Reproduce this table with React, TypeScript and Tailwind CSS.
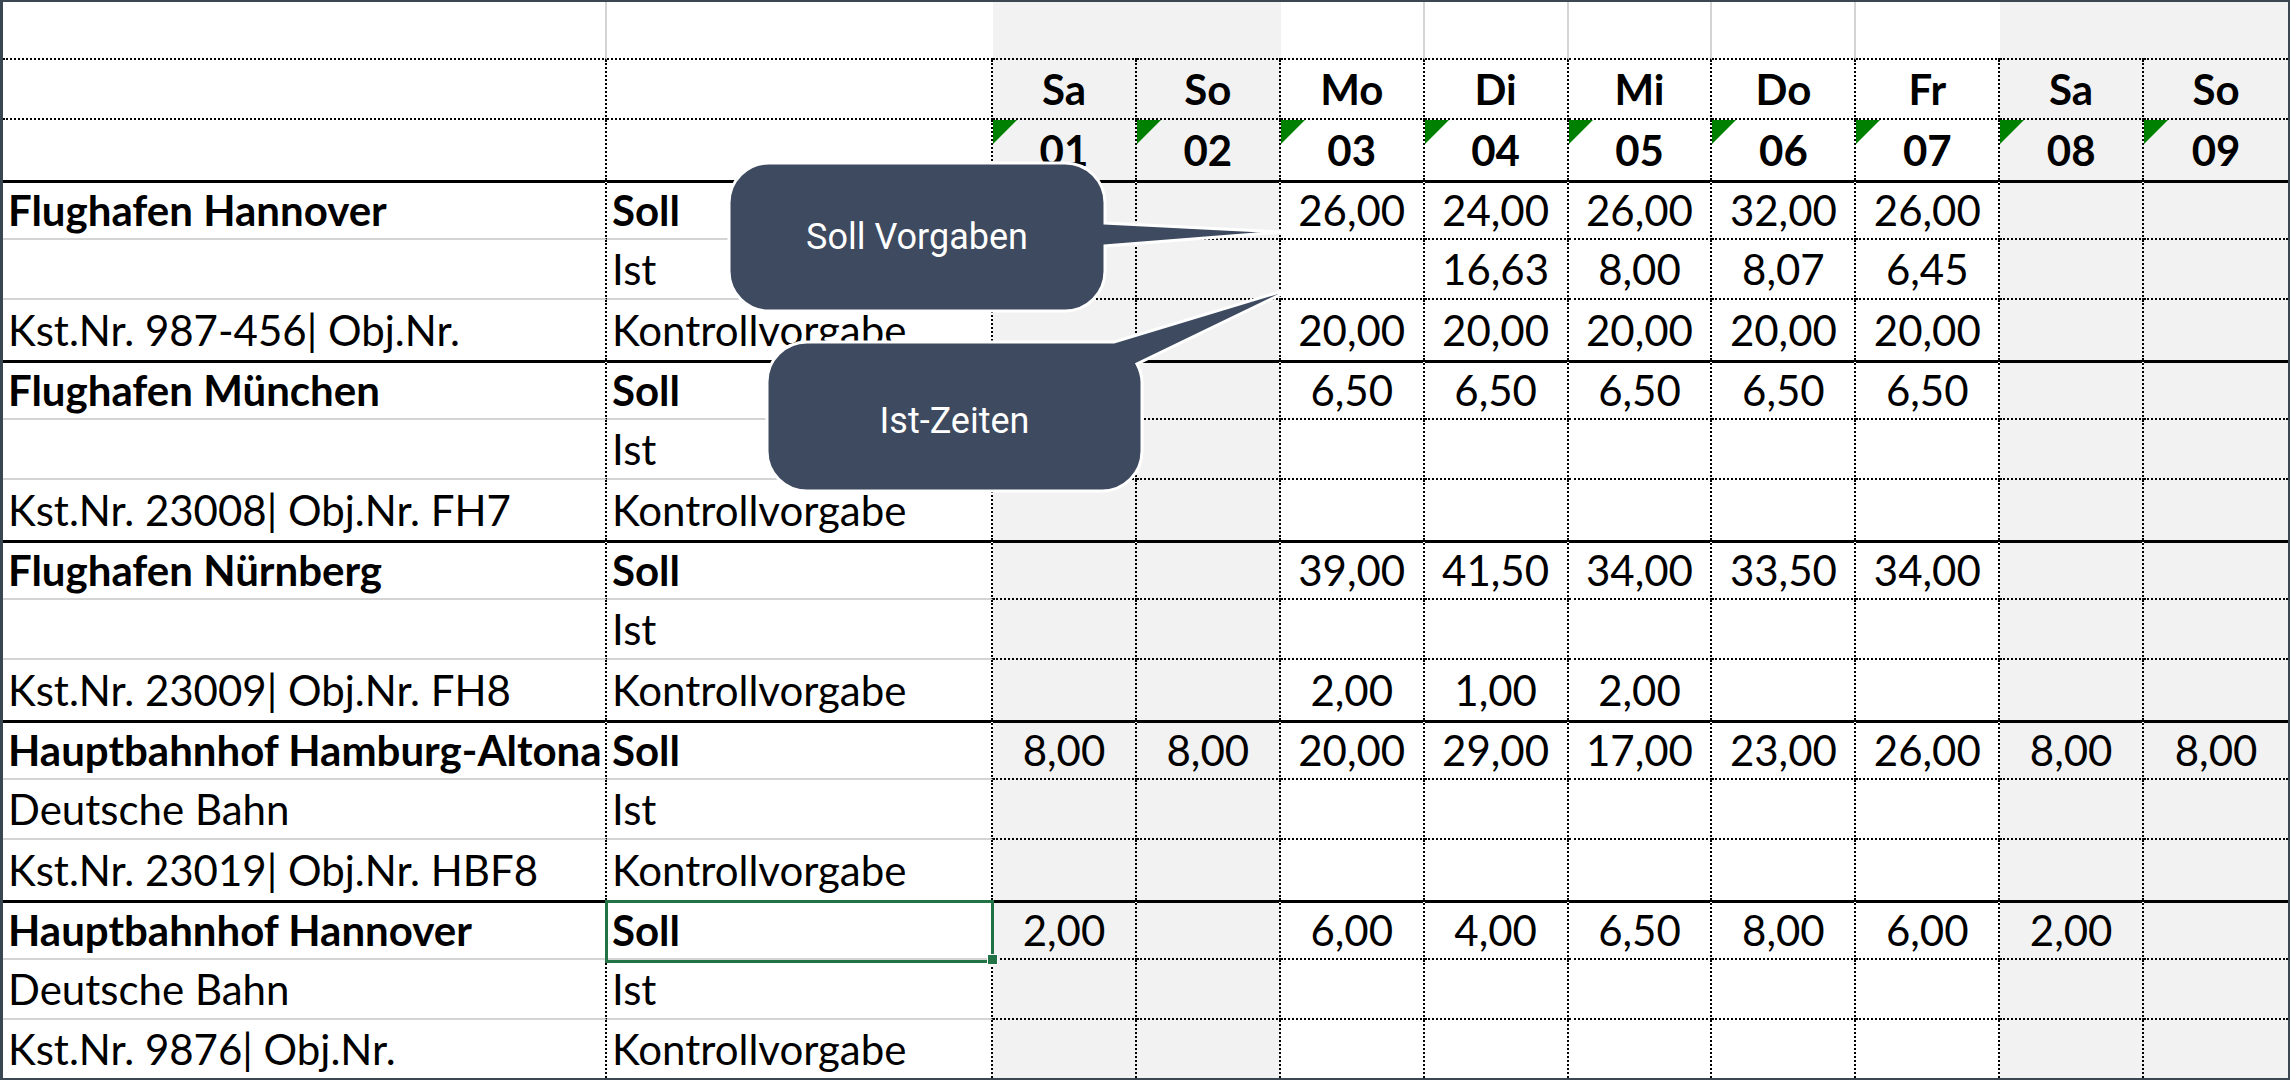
import React from 'react';

const days = ['Sa', 'So', 'Mo', 'Di', 'Mi', 'Do', 'Fr', 'Sa', 'So'];
const dates = ['01', '02', '03', '04', '05', '06', '07', '08', '09'];
const weekend = [0, 1, 7, 8];

type Group = {
  name: string;
  sub: string;
  kst: string;
  soll: string[];
  ist: string[];
  kontroll: string[];
};

const empty = ['', '', '', '', '', '', '', '', ''];

const groups: Group[] = [
  {
    name: 'Flughafen Hannover',
    sub: '',
    kst: 'Kst.Nr. 987-456| Obj.Nr.',
    soll: ['', '', '26,00', '24,00', '26,00', '32,00', '26,00', '', ''],
    ist: ['', '', '', '16,63', '8,00', '8,07', '6,45', '', ''],
    kontroll: ['', '', '20,00', '20,00', '20,00', '20,00', '20,00', '', ''],
  },
  {
    name: 'Flughafen München',
    sub: '',
    kst: 'Kst.Nr. 23008| Obj.Nr. FH7',
    soll: ['', '', '6,50', '6,50', '6,50', '6,50', '6,50', '', ''],
    ist: empty,
    kontroll: empty,
  },
  {
    name: 'Flughafen Nürnberg',
    sub: '',
    kst: 'Kst.Nr. 23009| Obj.Nr. FH8',
    soll: ['', '', '39,00', '41,50', '34,00', '33,50', '34,00', '', ''],
    ist: empty,
    kontroll: ['', '', '2,00', '1,00', '2,00', '', '', '', ''],
  },
  {
    name: 'Hauptbahnhof Hamburg-Altona',
    sub: 'Deutsche Bahn',
    kst: 'Kst.Nr. 23019| Obj.Nr. HBF8',
    soll: ['8,00', '8,00', '20,00', '29,00', '17,00', '23,00', '26,00', '8,00', '8,00'],
    ist: empty,
    kontroll: empty,
  },
  {
    name: 'Hauptbahnhof Hannover',
    sub: 'Deutsche Bahn',
    kst: 'Kst.Nr. 9876| Obj.Nr.',
    soll: ['2,00', '', '6,00', '4,00', '6,50', '8,00', '6,00', '2,00', ''],
    ist: empty,
    kontroll: empty,
  },
];

// builds the border/background classes of one cell (r = sheet row, c = column)
function cellClass(r: number, c: number) {
  const cls: string[] = ['flex items-center whitespace-nowrap min-w-0'];
  const d = c - 2;

  if (c !== 0) cls.push('overflow-hidden');

  if (d >= 0 && weekend.includes(d)) cls.push('bg-[#f2f2f2]');
  else cls.push('bg-white');

  // bottom
  if (r <= 1) {
    cls.push('border-b-2 [border-bottom-style:dotted] border-b-black');
  } else if (r >= 3) {
    const k = (r - 3) % 3;
    if (k < 2) {
      if (c < 2) cls.push('border-b-2 border-b-[#d4d4d4]');
      else cls.push('border-b-2 [border-bottom-style:dotted] border-b-black');
    }
    if (k === 0) cls.push('border-t-[3px] border-t-black');
  }

  // right
  if (r === 0) {
    if (c === 0 || (d >= 2 && d <= 5)) cls.push('border-r-2 border-r-[#d4d4d4]');
  } else if (c < 10) {
    cls.push('border-r-2 [border-right-style:dotted] border-r-black');
  }

  if (c === 0) cls.push('pl-[5px]');
  else if (c === 1) cls.push('pl-[5px]');
  else cls.push('justify-center');

  return cls.join(' ');
}

function Triangle() {
  return (
    <svg className="absolute top-0 left-0" width="24" height="24" viewBox="0 0 24 24">
      <polygon points="0,0 24,0 0,24" fill="#008000" />
    </svg>
  );
}

export default function App() {
  const rows: React.ReactNode[] = [];

  // header row 0 (empty)
  for (let c = 0; c < 11; c++) {
    rows.push(<div key={`h0-${c}`} className={cellClass(0, c)} />);
  }
  // header row 1: day names
  for (let c = 0; c < 11; c++) {
    rows.push(
      <div key={`h1-${c}`} className={`${cellClass(1, c)} font-bold`}>
        {c >= 2 ? days[c - 2] : ''}
      </div>
    );
  }
  // header row 2: dates with comment markers
  for (let c = 0; c < 11; c++) {
    rows.push(
      <div key={`h2-${c}`} className={`${cellClass(2, c)} relative font-bold`}>
        {c >= 2 && <Triangle />}
        {c >= 2 ? dates[c - 2] : ''}
      </div>
    );
  }

  groups.forEach((g, gi) => {
    const lines: [string, string, string[], boolean][] = [
      [g.name, 'Soll', g.soll, true],
      [g.sub, 'Ist', g.ist, false],
      [g.kst, 'Kontrollvorgabe', g.kontroll, false],
    ];
    lines.forEach(([a, b, vals, bold], li) => {
      const r = 3 + gi * 3 + li;
      const selected = gi === 4 && li === 0;
      rows.push(
        <div key={`r${r}-a`} className={`${cellClass(r, 0)} ${bold ? 'font-bold' : ''}`}>
          {a}
        </div>
      );
      rows.push(
        <div
          key={`r${r}-b`}
          className={`${cellClass(r, 1)} ${bold ? 'font-bold' : ''} ${selected ? 'relative overflow-visible' : ''}`}
        >
          {b}
          {selected && (
            <>
              <div className="absolute -top-[3px] -left-[2px] w-[389px] h-[63px] border-[3px] border-[#217346]" />
              <div className="absolute -bottom-[7px] -right-[7px] w-[11px] h-[11px] bg-[#217346] border border-white" />
            </>
          )}
        </div>
      );
      vals.forEach((v, d) => {
        rows.push(
          <div key={`r${r}-${d}`} className={cellClass(r, d + 2)}>
            {v}
          </div>
        );
      });
    });
  });

  return (
    <div className="relative w-[2290px] h-[1080px] overflow-hidden bg-white font-['Lato',sans-serif] text-[42px] text-black">
      <div className="grid w-full h-full grid-cols-[604px_386px_repeat(9,minmax(0,1fr))] grid-rows-[58px_repeat(16,60px)_58px] border-t-2 border-b-2 border-l-[3px] border-r-2 border-[#3a4753]">
        {rows}
      </div>

      {/* callouts */}
      <svg className="absolute inset-0 pointer-events-none" width="2290" height="1080" viewBox="0 0 2290 1080">
        <path
          d="M769 163 H1065 A40 40 0 0 1 1105 203 V223 L1281 232 L1105 246 V271 A40 40 0 0 1 1065 311 H769 A40 40 0 0 1 729 271 V203 A40 40 0 0 1 769 163 Z"
          fill="#3d4a5f"
          stroke="#ffffff"
          strokeWidth="3"
        />
        <path
          d="M807 342 H1114 L1296 287 L1137 364 A40 40 0 0 1 1142 382 V451 A40 40 0 0 1 1102 491 H807 A40 40 0 0 1 767 451 V382 A40 40 0 0 1 807 342 Z"
          fill="#3d4a5f"
          stroke="#ffffff"
          strokeWidth="3"
        />
      </svg>
      <div className="absolute left-[729px] top-[163px] w-[376px] h-[148px] flex items-center justify-center font-['Roboto',sans-serif] text-[36px] text-white">
        Soll Vorgaben
      </div>
      <div className="absolute left-[767px] top-[346px] w-[375px] h-[149px] flex items-center justify-center font-['Roboto',sans-serif] text-[36px] text-white">
        Ist-Zeiten
      </div>
    </div>
  );
}
